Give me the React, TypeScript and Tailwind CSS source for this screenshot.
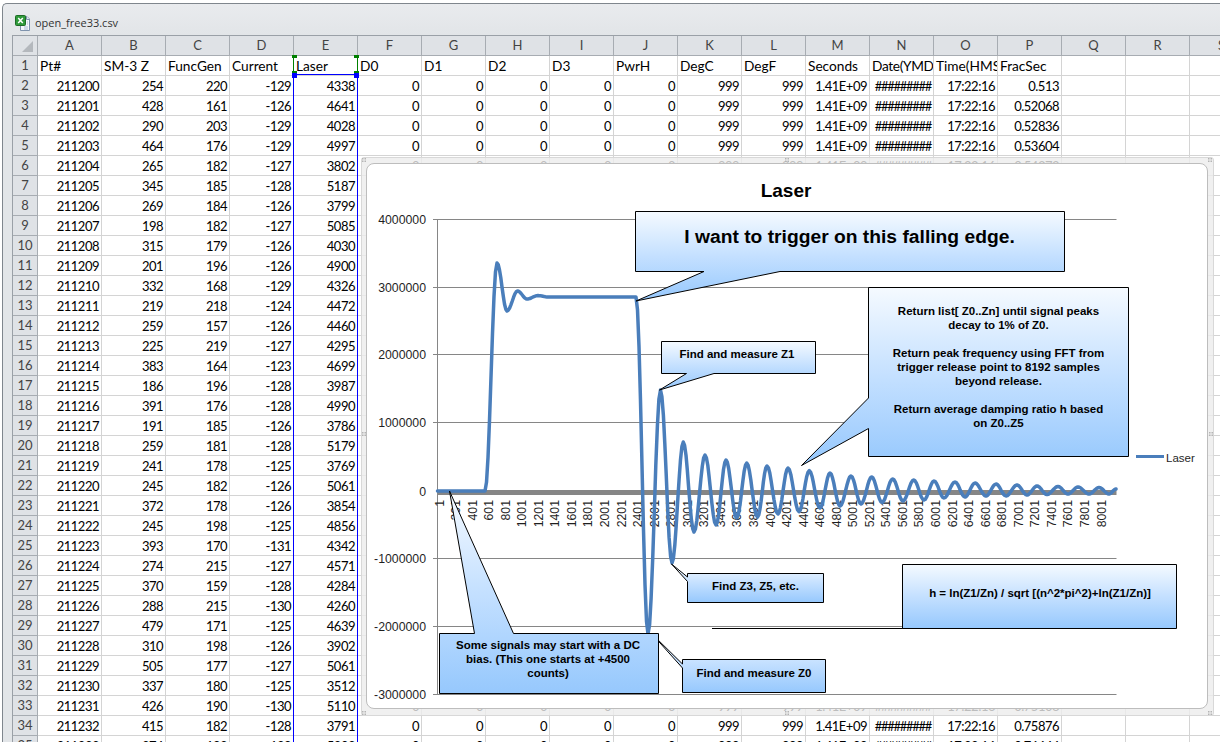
import React from "react";

const COLS = ["A","B","C","D","E","F","G","H","I","J","K","L","M","N","O","P","Q","R","S"];
const HEAD = ["Pt#","SM-3 Z","FuncGen","Current","Laser","D0","D1","D2","D3","PwrH","DegC","DegF","Seconds","Date(YMD","Time(HMS","FracSec"];
const DATA: number[][] = [
[254,220,-129,4338],[428,161,-126,4641],[290,203,-129,4028],[464,176,-129,4997],[265,182,-127,3802],[345,185,-128,5187],[269,184,-126,3799],[198,182,-127,5085],[315,179,-126,4030],[201,196,-126,4900],[332,168,-129,4326],[219,218,-124,4472],[259,157,-126,4460],[225,219,-127,4295],[383,164,-123,4699],[186,196,-128,3987],[391,176,-128,4990],[191,185,-126,3786],[259,181,-128,5179],[241,178,-125,3769],[245,182,-126,5061],[372,178,-126,3854],[245,198,-125,4856],[393,170,-131,4342],[274,215,-127,4571],[370,159,-128,4284],[288,215,-130,4260],[479,171,-125,4639],[310,198,-126,3902],[505,177,-127,5061],[337,180,-125,3512],[426,190,-130,5110],[415,182,-128,3791],[374,183,-128,5203],
];

const EXT: [number, number][] = [
[485,491],[497,263],[507,311],[517.5,291],[527,299],[538,295.6],[548,297],[636,297],[648,634],[660.5,390],[672,563],[683.3,442],[694,532],[705,455],[716,525],[726,460],[736.7,518],[746.7,463],[757.5,517],[767,466],[778,514],[788,468],[799,511.7],[809.3,470.7],[820,508],[830,473],[840,506],[851,476],[861,504],[871.7,477],[882,502.5],[892.7,479],[903,501],[913.7,480],[924,500],[934,481],[944,498],[955,482],[965,497],[975,483],[986,496],[996,484],[1006,496],[1017,485],[1027,495],[1037,486],[1047,494.5],[1058,486.5],[1068,494],[1078,487],[1089,494],[1099,487.5],[1109,494],[1116,489],
];

function signalPath() {
  let d = "M437.5 491 L485 491";
  for (let i = 1; i < EXT.length; i++) {
    const [x0, y0] = EXT[i - 1];
    const [x1, y1] = EXT[i];
    if (x1 - x0 > 50) { d += ` L${x1} ${y1}`; continue; }
    for (let k = 1; k <= 8; k++) {
      const t = k / 8;
      const e = (1 - Math.cos(Math.PI * t)) / 2;
      d += ` L${(x0 + (x1 - x0) * t).toFixed(1)} ${(y0 + (y1 - y0) * e).toFixed(1)}`;
    }
  }
  return d;
}

const Y_LABELS = [["4000000",219.5],["3000000",287.5],["2000000",354.5],["1000000",422.5],["0",491],["-1000000",558.5],["-2000000",626.5],["-3000000",694.5]] as [string, number][];
const X_LABELS = Array.from({ length: 41 }, (_, i) => i * 200 + 1);
const HANDLES: [number, number][] = [[362,158],[785,158],[1208,158],[362,432],[1209,432],[362,711],[785,711],[1208,711]];

function Callout({ d, id }: { d: string; id: string }) {
  return <path d={d} fill={`url(#${id})`} stroke="#000" strokeWidth="1" />;
}

function Label({ x, y, children, size = 11.5 }: { x: number; y: number; children: React.ReactNode; size?: number }) {
  return (
    <text x={x} y={y} textAnchor="middle" fontSize={size} fontWeight="700" fill="#000" fontFamily="'Liberation Sans', Arial, sans-serif">
      {children}
    </text>
  );
}

function Chart() {
  return (
    <svg viewBox="361 157 853 559" className="block h-[559px] w-[853px]">
      <defs>
        {["g1","g2","g3","g4","g5","g6","g7"].map((id) => (
          <linearGradient key={id} id={id} x1="0" y1="0" x2="0" y2="1">
            <stop offset="0" stopColor="#f5faff" />
            <stop offset="0.5" stopColor="#c4e0ff" />
            <stop offset="1" stopColor="#96c8fd" />
          </linearGradient>
        ))}
      </defs>
      {HANDLES.map(([x, y]) => (
        <g key={`${x}-${y}`} fill="#b4b4b4">
          <rect x={x} y={y} width="1.5" height="1.5" />
          <rect x={x + 2.5} y={y} width="1.5" height="1.5" />
          <rect x={x} y={y + 2.5} width="1.5" height="1.5" />
          <rect x={x + 2.5} y={y + 2.5} width="1.5" height="1.5" />
        </g>
      ))}
      {[219.5,287.5,354.5,422.5,558.5,626.5,694.5].map((y) => (
        <line key={y} x1="433" x2="1116.5" y1={y} y2={y} stroke="#868686" strokeWidth="1" />
      ))}
      <line x1="437.5" x2="437.5" y1="219" y2="695" stroke="#868686" strokeWidth="1" />
      <rect x="437" y="490" width="679.5" height="5" fill="#868686" />
      {Y_LABELS.map(([t, y]) => (
        <text key={t} x="426" y={y + 4.5} textAnchor="end" fontSize="12.3" fill="#1f1f1f" fontFamily="'Liberation Sans', Arial, sans-serif">{t}</text>
      ))}
      {X_LABELS.map((v, i) => (
        <text key={v} transform={`translate(${443.5 + i * 16.55} 500) rotate(-90)`} textAnchor="end" fontSize="12.3" fill="#1f1f1f" fontFamily="'Liberation Sans', Arial, sans-serif">{v}</text>
      ))}
      <path d={signalPath()} fill="none" stroke="#4a7ebb" strokeWidth="3.5" strokeLinejoin="round" strokeLinecap="round" />
      <text x="786" y="197" textAnchor="middle" fontSize="19" fontWeight="700" fill="#000" fontFamily="'Liberation Sans', Arial, sans-serif">Laser</text>
      <line x1="1136" x2="1164" y1="456.5" y2="456.5" stroke="#4a7ebb" strokeWidth="3" />
      <text x="1166" y="462" fontSize="11.5" fill="#1f1f1f" fontFamily="'Liberation Sans', Arial, sans-serif">Laser</text>

      <Callout id="g1" d="M635.5 211.5 H1064.5 V271.5 H780 L636 301 L704 271.5 H635.5 Z" />
      <Label x={849.5} y={243} size={19.25}>I want to trigger on this falling edge.</Label>

      <Callout id="g2" d="M661.5 341.5 H815.5 V373.5 H714 L659.5 390 L686.5 373.5 H661.5 Z" />
      <Label x={737} y={358}>Find and measure Z1</Label>

      <Callout id="g3" d="M868.5 287.5 H1128.5 V456.5 H868.5 V428.5 L801.5 465.5 L868.5 398 Z" />
      {[["Return list[ Z0..Zn] until signal peaks",315],["decay to 1% of Z0.",329],["Return peak frequency using FFT from",357],["trigger release point to 8192 samples",371],["beyond release.",385],["Return average damping ratio h based",413],["on Z0..Z5",427]].map(([t, y]) => (
        <Label key={t as string} x={998.5} y={y as number}>{t}</Label>
      ))}

      <line x1="712" x2="903" y1="628.5" y2="628.5" stroke="#000" strokeWidth="1" />
      <Callout id="g4" d="M902.5 564.5 H1176.5 V628.5 H902.5 Z" />
      <Label x={1040} y={597}>h = ln(Z1/Zn) / sqrt [(n^2*pi^2)+ln(Z1/Zn)]</Label>

      <Callout id="g5" d="M687.5 573.5 H823.5 V602.5 H687.5 V581.5 L671.5 564 L687.5 577 Z" />
      <Label x={755.5} y={590}>Find Z3, Z5, etc.</Label>

      <Callout id="g6" d="M682.5 659.5 H825.5 V692.5 H682.5 V668 L651.5 633.5 L682.5 664 Z" />
      <Label x={754} y={677}>Find and measure Z0</Label>

      <Callout id="g7" d="M439.5 633.5 H474.5 L449.5 491 L513.5 633.5 H658.5 V693.5 H439.5 Z" />
      <Label x={548} y={649}>Some signals may start with a DC</Label>
      <Label x={548} y={663}>bias. (This one starts at +4500</Label>
      <Label x={548} y={677}>counts)</Label>
    </svg>
  );
}

function Cell({ children, right, className = "" }: { children?: React.ReactNode; right?: boolean; className?: string }) {
  return (
    <div className={`h-5 w-16 shrink-0 overflow-hidden whitespace-nowrap border-r border-b border-[#d4d4d4] px-[2px] leading-[20px] ${right ? "text-right tracking-[-0.5px]" : "text-left"} ${className}`}>
      {children}
    </div>
  );
}

function frac(i: number) {
  return String(parseFloat((0.513 + i * 0.00768).toFixed(5)));
}

export default function App() {
  return (
    <div className="relative h-[742px] w-[1220px] overflow-hidden bg-white font-['Lato','Liberation_Sans',sans-serif] text-[13px] text-black">
      <div className="h-[3px] bg-white" />
      <div className="ml-[2px] h-[739px] rounded-tl-[5px] border-t border-l border-[#7f868d] bg-[linear-gradient(#e9ebee,#e2e5e8_30px)] pl-[9px]">
        <div className="flex h-[31px] items-center gap-[4px] pt-[7px] pl-[3px]">
          <svg width="16" height="16" viewBox="0 0 16 16" className="shrink-0">
            <path d="M5.5 1.5 H12 L14.5 4 V15.5 H5.5 Z" fill="#f4f7fb" stroke="#7f93ad" />
            <path d="M11.5 1.5 V4.5 H14.5" fill="#dfe7f1" stroke="#7f93ad" />
            <path d="M9 12 H13 M9 14 H13 M12 7 H13 M12 9 H13" stroke="#a9bcd2" />
            <rect x="0.5" y="0.5" width="10" height="10" rx="1" fill="#2f9a3a" stroke="#1e6b27" />
            <path d="M3.2 3 L7.8 8 M7.8 3 L3.2 8" stroke="#fff" strokeWidth="1.5" />
          </svg>
          <span className="font-['Open_Sans','Liberation_Sans',sans-serif] text-[11px] text-[#333]">open_free33.csv</span>
        </div>
        <div className="h-[707px] overflow-hidden border-t border-l border-[#9aa0a7] bg-white">
          <div className="flex h-5 w-[1300px]">
            <div className="relative h-5 w-[25px] shrink-0 border-r border-b border-[#a7acb2] bg-[#dfe2e6]">
              <div className="absolute right-[4px] bottom-[3px] h-0 w-0 border-b-[11px] border-l-[11px] border-b-[#b4b8bd] border-l-transparent" />
            </div>
            {COLS.map((c) => (
              <div key={c} className="flex h-5 w-16 shrink-0 items-center justify-center border-r border-b border-[#a7acb2] bg-[#dfe2e6] text-[#444]">{c}</div>
            ))}
          </div>
          <div className="flex w-[1300px]">
            <div className="flex h-5 w-[25px] shrink-0 items-center justify-center border-r border-b border-[#a7acb2] bg-[#dfe2e6] text-[#444]">1</div>
            {COLS.map((c, i) => (
              <Cell key={c} className="text-[13.7px]">
                {HEAD[i] === "Date(YMD" ? <span className="tracking-[-0.35px]">{HEAD[i]}</span> : HEAD[i]}
              </Cell>
            ))}
          </div>
          {DATA.map((r, i) => (
            <div key={i} className="flex w-[1300px]">
              <div className="flex h-5 w-[25px] shrink-0 items-center justify-center border-r border-b border-[#a7acb2] bg-[#dfe2e6] text-[#444]">{i + 2}</div>
              <Cell right>{211200 + i}</Cell>
              <Cell right>{r[0]}</Cell>
              <Cell right>{r[1]}</Cell>
              <Cell right>{r[2]}</Cell>
              <Cell right>{r[3]}</Cell>
              <Cell right>0</Cell>
              <Cell right>0</Cell>
              <Cell right>0</Cell>
              <Cell right>0</Cell>
              <Cell right>0</Cell>
              <Cell right>999</Cell>
              <Cell right>999</Cell>
              <Cell right>1.41E+09</Cell>
              <Cell right><span className="tracking-[-1.3px]">#########</span></Cell>
              <Cell right>17:22:16</Cell>
              <Cell right>{frac(i)}</Cell>
              <Cell />
              <Cell />
              <Cell />
            </div>
          ))}
        </div>
      </div>

      {/* selection around column E */}
      <div className="pointer-events-none absolute top-[74px] bottom-0 left-[293px] w-[65px] border-x border-t border-[#0000ff]" />
      <div className="absolute top-[55px] left-[293px] h-[20px] w-px bg-[#008000]" />
      <div className="absolute top-[55px] left-[357px] h-[20px] w-px bg-[#008000]" />
      <div className="absolute top-[55px] left-[292px] h-[3px] w-[5px] bg-[#008000]" />
      <div className="absolute top-[55px] left-[354px] h-[3px] w-[5px] bg-[#008000]" />
      <div className="absolute top-[71px] left-[292px] h-[2px] w-[5px] bg-[#008000]" />
      <div className="absolute top-[71px] left-[354px] h-[2px] w-[5px] bg-[#008000]" />
      <div className="absolute top-[73px] left-[292px] h-[5px] w-[5px] bg-[#0000ff]" />
      <div className="absolute top-[73px] left-[354px] h-[5px] w-[5px] bg-[#0000ff]" />

      {/* chart object floating over the sheet */}
      <div className="absolute top-[157px] left-[361px] h-[559px] w-[853px] rounded-[3px] border border-[#d8d8d8] bg-[#ececec]/80">
        <div className="absolute top-[5px] right-[5px] bottom-[6px] left-[4px] rounded-[8px] border border-[#bdbdbd] bg-white" />
        <div className="absolute -top-px -left-px">
          <Chart />
        </div>
      </div>
    </div>
  );
}
